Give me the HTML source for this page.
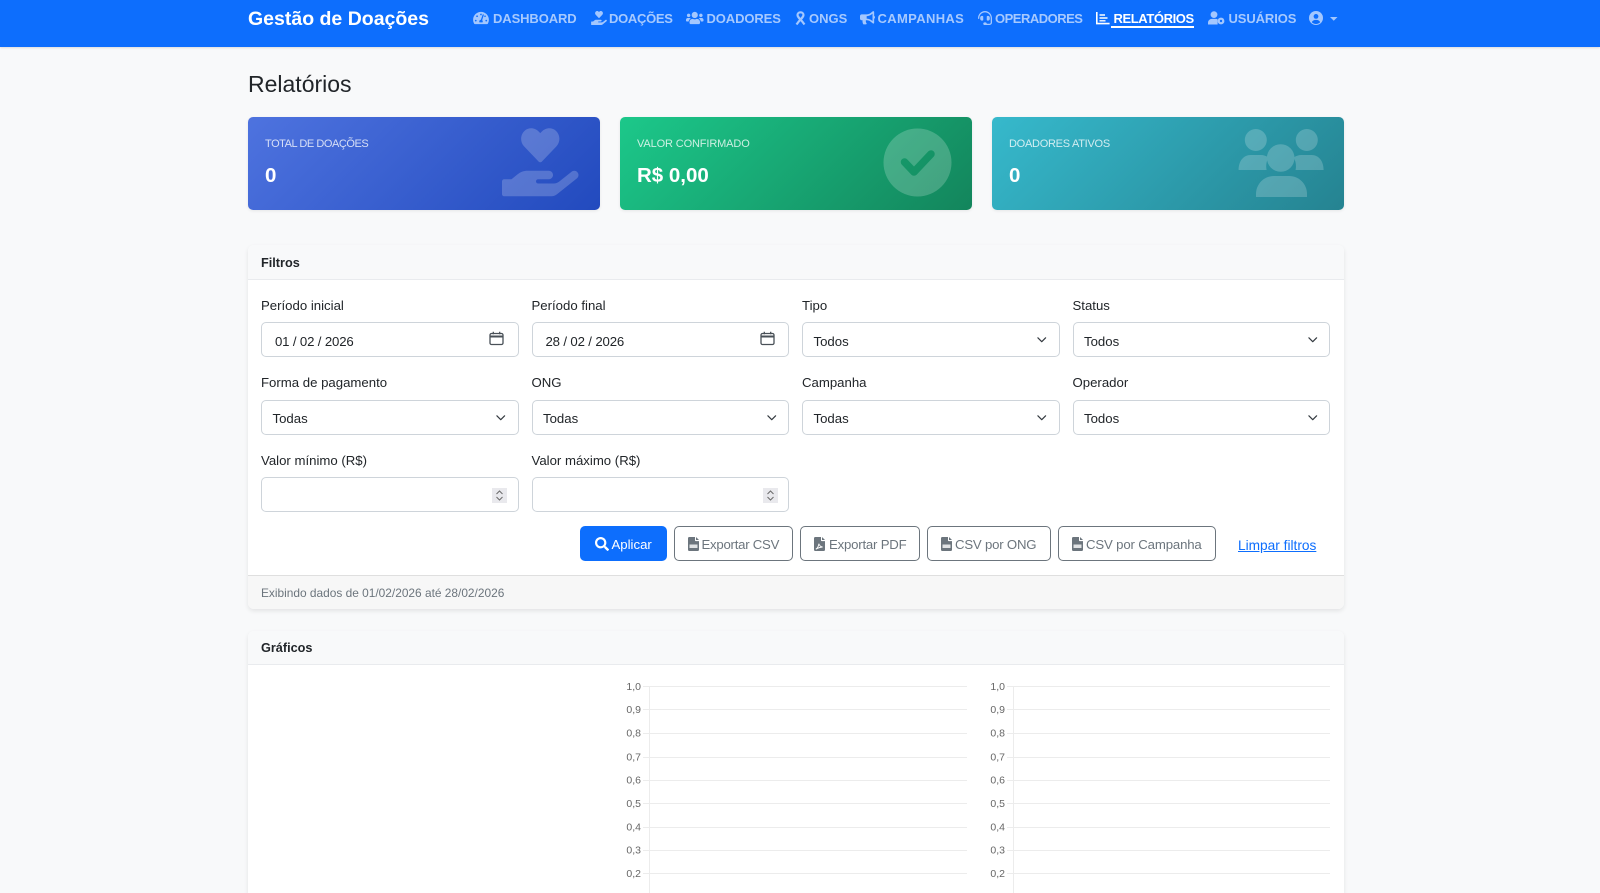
<!DOCTYPE html>
<html lang="pt-BR">
<head>
<meta charset="utf-8">
<title>Relatórios</title>
<style>
html,body{margin:0;padding:0;width:1600px;height:893px;overflow:hidden;background:#f8f9fa;font-family:"Liberation Sans",Arial,sans-serif;color:#212529}
body{position:relative}
*{box-sizing:border-box}
.t{position:absolute;white-space:nowrap;line-height:1}
.abs{position:absolute}
svg{display:block;overflow:visible}
.nav{position:absolute;left:0;top:0;width:1600px;height:47px;background:#0d6efd;box-shadow:0 1px 2px rgba(0,0,0,.12)}
.ni{position:absolute;fill:#a3c7fe}
.nt{position:absolute;top:12px;font-size:13px;line-height:14px;font-weight:700;color:#a6c9fe;white-space:nowrap}
.stat{position:absolute;top:116.5px;width:352px;height:93.5px;border-radius:5px;box-shadow:0 1px 3px rgba(0,0,0,.08)}
.sl{position:absolute;left:17px;top:21.5px;font-size:11px;line-height:12px;color:rgba(255,255,255,.78);white-space:nowrap}
.sv{position:absolute;left:17px;top:47.5px;font-size:20.5px;line-height:24px;font-weight:700;color:#fff;white-space:nowrap}
.si{position:absolute;fill:#fff;opacity:.2}
.card{position:absolute;left:248px;width:1096px;background:#fff;border-radius:6px;box-shadow:0 2px 5px rgba(0,0,0,.09)}
.ch{position:absolute;left:0;top:0;width:100%;background:#f8f9fa;border-bottom:1px solid #e9ebee;border-radius:6px 6px 0 0}
.lb{position:absolute;font-size:13.2px;line-height:16px;color:#212529;white-space:nowrap}
.in{position:absolute;width:257.5px;height:35px;background:#fff;border:1px solid #ced4da;border-radius:5px;font-size:13.2px;line-height:35px;color:#212529;white-space:nowrap}
.in span{position:absolute;top:0}
.in svg{position:absolute}
.r1 span{top:1px}
.btn{position:absolute;top:525.5px;height:35.5px;border:1px solid #6c757d;border-radius:5px;font-size:13.2px;line-height:36px;color:#6c757d;background:#fff;white-space:nowrap}
.btn svg{position:absolute;top:10.5px;fill:#6c757d}
.btn span{position:absolute;top:0}
</style>
</head>
<body>

<div class="nav"></div>
<div class="t" style="left:248px;top:8px;font-size:19.5px;line-height:22px;font-weight:700;color:#fff">Gestão de Doações</div>

<svg class="ni" style="left:473px;top:11px" width="16" height="14" viewBox="0 0 576 512"><path d="M288 32C128.94 32 0 160.94 0 320c0 52.8 14.25 102.26 39.06 144.8 5.61 9.62 16.3 15.2 27.44 15.2h443c11.14 0 21.83-5.58 27.44-15.2C561.75 422.26 576 372.8 576 320c0-159.06-128.94-288-288-288zm0 64c14.71 0 26.58 10.13 30.32 23.65-1.11 2.26-2.64 4.23-3.45 6.67l-9.22 27.67c-5.13 3.49-10.97 6.01-17.64 6.01-17.67 0-32-14.33-32-32S270.33 96 288 96zM96 384c-17.67 0-32-14.33-32-32s14.33-32 32-32 32 14.33 32 32-14.33 32-32 32zm48-160c-17.67 0-32-14.33-32-32s14.33-32 32-32 32 14.33 32 32-14.33 32-32 32zm246.77-72.41l-61.33 184C343.13 347.33 352 364.54 352 384c0 11.72-3.38 22.55-8.88 32H232.88c-5.5-9.45-8.88-20.28-8.88-32 0-33.94 26.5-61.43 59.9-63.59l61.34-184.01c4.17-12.56 17.73-19.45 30.36-15.17 12.57 4.19 19.35 17.79 15.17 30.36zm14.66 57.2l15.52-46.55c3.47-1.29 7.13-2.23 11.05-2.23 17.67 0 32 14.33 32 32s-14.33 32-32 32c-11.38-.01-20.89-6.27-26.57-15.22zM480 384c-17.67 0-32-14.33-32-32s14.33-32 32-32 32 14.33 32 32-14.33 32-32 32z"/></svg>
<div class="nt" style="left:493px;letter-spacing:-.1px">DASHBOARD</div>

<svg class="ni" style="left:590.5px;top:11px" width="16" height="14" viewBox="0 0 576 512"><path d="M275.3 250.5c7 7.4 18.4 7.4 25.5 0l108.9-114.2c31.6-33.2 29.8-88.2-5.6-118.8-30.8-26.7-76.7-21.9-104.9 7.7L288 36.9l-11.1-11.6C248.7-4.4 202.8-9.2 172 17.5c-35.3 30.6-37.2 85.6-5.6 118.8l108.9 114.2zm290 77.6c-11.8-10.7-30.2-10-42.6 0L430.3 402c-11.3 9.1-25.4 14-40 14H272c-8.8 0-16-7.2-16-16s7.2-16 16-16h78.3c15.9 0 30.7-10.9 33.3-26.6 3.3-20-12.1-37.4-31.6-37.4H192c-27 0-53.1 9.3-74.1 26.3L71.4 384H16c-8.8 0-16 7.2-16 16v96c0 8.8 7.2 16 16 16h356.7c14.5 0 28.6-4.9 40-14l151.2-121c15.2-12.1 16.4-35.3 1.4-48.9z"/></svg>
<div class="nt" style="left:609px;letter-spacing:-.3px">DOAÇÕES</div>

<svg class="ni" style="left:686px;top:11px" width="17.5" height="14" viewBox="0 0 640 512"><path d="M96 224c35.3 0 64-28.7 64-64s-28.7-64-64-64-64 28.7-64 64 28.7 64 64 64zm448 0c35.3 0 64-28.7 64-64s-28.7-64-64-64-64 28.7-64 64 28.7 64 64 64zm32 32h-64c-17.6 0-33.5 7.1-45.1 18.6 40.3 22.1 68.9 62 75.1 109.4h66c17.7 0 32-14.3 32-32v-32c0-35.3-28.7-64-64-64zm-256 0c61.9 0 112-50.1 112-112S381.9 32 320 32 208 82.1 208 144s50.1 112 112 112zm76.8 32h-8.3c-20.8 10-43.9 16-68.5 16s-47.6-6-68.5-16h-8.3C179.6 288 128 339.6 128 403.2V432c0 26.5 21.5 48 48 48h288c26.5 0 48-21.5 48-48v-28.8c0-63.6-51.6-115.2-115.2-115.2zm-223.7-13.4C161.5 263.1 145.6 256 128 256H64c-35.3 0-64 28.7-64 64v32c0 17.7 14.3 32 32 32h65.9c6.3-47.4 34.9-87.3 75.2-109.4z"/></svg>
<div class="nt" style="left:706.5px;letter-spacing:-.1px">DOADORES</div>

<svg class="abs" style="left:793.5px;top:11px" width="13" height="14" viewBox="0 0 13 14" fill="none" stroke="#a3c7fe" stroke-width="2.2" stroke-linejoin="round"><path d="M6.500 1.300C4.500 1.300 3.500 2.800 3.500 4c0 1.500 1.500 3 4.500 6.200L10.500 13.500"/><path d="M6.500 1.300C8.500 1.300 9.500 2.800 9.500 4c0 1.500-1.500 3-4.500 6.200L2.500 13.500"/></svg>
<div class="nt" style="left:809px">ONGS</div>

<svg class="ni" style="left:860px;top:11px" width="15" height="13.5" viewBox="0 0 576 512"><path d="M576 240c0-23.63-12.95-44.04-32-55.12V32.01C544 23.26 537.02 0 512 0c-7.12 0-14.19 2.38-19.98 7.02l-85.03 68.03C364.28 109.19 310.66 128 256 128H64c-35.35 0-64 28.65-64 64v96c0 35.35 28.65 64 64 64h33.7c-1.39 10.48-2.18 21.14-2.18 32 0 39.77 9.26 77.35 25.56 110.94 5.19 10.69 16.52 17.06 28.4 17.06h74.28c26.05 0 41.69-29.84 25.9-50.56-16.4-21.52-26.15-48.36-26.15-77.44 0-11.11 1.62-21.79 4.41-32H256c54.66 0 108.28 18.81 150.98 52.95l85.03 68.03a32.023 32.023 0 0 0 19.98 7.02c24.92 0 32-22.78 32-32V295.13C563.05 284.04 576 263.63 576 240zm-96 141.42l-33.05-26.44C392.95 311.78 325.12 288 256 288v-96c69.12 0 136.95-23.78 190.95-66.98L480 98.58v282.84z"/></svg>
<div class="nt" style="left:877.5px;letter-spacing:.35px">CAMPANHAS</div>

<svg class="ni" style="left:977.5px;top:11px" width="14" height="14" viewBox="0 0 512 512"><path d="M192 208c0-17.67-14.33-32-32-32h-16c-35.35 0-64 28.65-64 64v48c0 35.35 28.65 64 64 64h16c17.67 0 32-14.33 32-32V208zm176 144c35.35 0 64-28.65 64-64v-48c0-35.35-28.65-64-64-64h-16c-17.67 0-32 14.33-32 32v112c0 17.67 14.33 32 32 32h16zM256 0C113.18 0 4.58 118.83 0 256v16c0 8.84 7.16 16 16 16h16c8.84 0 16-7.16 16-16v-16c0-114.69 93.31-208 208-208s208 93.31 208 208h-.12c.08 2.43.12 165.72.12 165.72 0 23.35-18.93 42.28-42.28 42.28H320c0-26.51-21.49-48-48-48h-32c-26.51 0-48 21.49-48 48s21.490 48 48 48h181.72c49.86 0 90.28-40.42 90.28-90.28V256C507.42 118.83 398.82 0 256 0z"/></svg>
<div class="nt" style="left:995px;letter-spacing:-.5px">OPERADORES</div>

<svg class="abs" style="left:1096px;top:11px" width="14" height="14" viewBox="0 0 14 14" fill="none" stroke="#fff"><path d="M.8 1v11.600H13.600" stroke-width="1.600"/><path d="M3.500 4h5.500M3.500 7h8M3.500 9.800h6" stroke-width="1.400"/></svg>
<div class="nt" style="left:1110.5px;color:#fff;border-bottom:2px solid #fff;height:16px;padding-left:3px;letter-spacing:-.4px">RELATÓRIOS</div>

<svg class="abs" style="left:1208px;top:11px" width="17" height="14" viewBox="0 0 17 14" fill="#a3c7fe"><circle cx="6" cy="3.600" r="3.400"/><path d="M0 13.500v-1.800C0 9.500 1.800 7.900 4 7.900h3.800c.7 0 1.300.2 1.800.4v5.200z"/><circle cx="13" cy="10" r="3.400"/><circle cx="13" cy="10" r="1.200" fill="#0d6efd"/></svg>
<div class="nt" style="left:1228.5px;letter-spacing:-.1px">USUÁRIOS</div>

<svg class="abs" style="left:1309px;top:11px" width="14" height="14" viewBox="0 0 14 14"><circle cx="7" cy="7" r="7" fill="#a3c7fe"/><circle cx="7" cy="5.400" r="2.400" fill="#0d6efd"/><path d="M2.800 11.300c.6-1.600 2-2.400 4.200-2.400s3.600.8 4.200 2.400C10 12.500 8.600 13 7 13s-3-.5-4.200-1.700z" fill="#0d6efd"/></svg>
<svg class="abs" style="left:1330px;top:16.5px" width="7.500" height="3.800" viewBox="0 0 8 4"><path d="M0 0h8L4 4z" fill="#a3c7fe"/></svg>

<div class="t" style="left:248px;top:70px;font-size:23px;line-height:28px;color:#212529">Relatórios</div>

<!-- Stat cards -->
<div class="stat" style="left:248px;background:linear-gradient(135deg,#4e73df 0%,#224abe 100%)">
  <div class="sl" style="letter-spacing:-.45px">TOTAL DE DOAÇÕES</div><div class="sv">0</div>
  <svg class="si" style="left:254px;top:11.500px" width="76.500" height="68.500" viewBox="0 0 576 512"><path d="M275.3 250.5c7 7.4 18.4 7.4 25.5 0l108.9-114.2c31.6-33.2 29.8-88.2-5.6-118.8-30.8-26.7-76.7-21.9-104.9 7.7L288 36.9l-11.1-11.6C248.7-4.4 202.8-9.2 172 17.5c-35.3 30.6-37.2 85.6-5.6 118.8l108.9 114.2zm290 77.6c-11.8-10.7-30.2-10-42.6 0L430.3 402c-11.3 9.1-25.4 14-40 14H272c-8.8 0-16-7.2-16-16s7.2-16 16-16h78.3c15.9 0 30.7-10.9 33.3-26.6 3.3-20-12.1-37.4-31.6-37.4H192c-27 0-53.1 9.3-74.1 26.3L71.4 384H16c-8.8 0-16 7.2-16 16v96c0 8.8 7.2 16 16 16h356.7c14.5 0 28.6-4.9 40-14l151.2-121c15.2-12.1 16.4-35.3 1.4-48.9z"/></svg>
</div>
<div class="stat" style="left:620px;background:linear-gradient(135deg,#1cc88a 0%,#13855c 100%)">
  <div class="sl" style="letter-spacing:-.13px">VALOR CONFIRMADO</div><div class="sv">R$ 0,00</div>
  <svg class="si" style="left:263px;top:11.5px" width="69" height="69" viewBox="0 0 69 69"><mask id="ck"><rect width="69" height="69" fill="#fff"/><path d="M21.500 34l9.500 10L48 26" fill="none" stroke="#000" stroke-width="7.500" stroke-linecap="round" stroke-linejoin="round"/></mask><circle cx="34.500" cy="34.500" r="34" mask="url(#ck)"/></svg>
</div>
<div class="stat" style="left:992px;background:linear-gradient(135deg,#36b9cc 0%,#258391 100%)">
  <div class="sl" style="letter-spacing:-.27px">DOADORES ATIVOS</div><div class="sv">0</div>
  <svg class="si" style="left:0;top:0" width="352" height="93" viewBox="0 0 352 93"><circle cx="263.800" cy="23" r="11"/><circle cx="314.800" cy="23" r="11"/><circle cx="288.700" cy="41" r="13.800"/><path d="M246.600 53c0-9 5-15 12-15h10c3 0 6 1 8 2.500-2 3-3 8-2 12.500z"/><path d="M331.600 53c0-9-5-15-12-15h-10c-3 0-6 1-8 2.500 2 3 3 8 2 12.500z"/><path d="M264 80v-3c0-10 8-18 18-18h15c10 0 18 8 18 18v3z"/></svg>
</div>

<!-- Filtros card -->
<div class="card" style="top:245px;height:364px">
  <div class="ch" style="height:35px"></div>
  <div class="abs" style="left:0;top:330px;width:100%;height:34px;background:#f7f7f7;border-top:1px solid #dfdfdf;border-radius:0 0 6px 6px"></div>
</div>
<div class="t" style="left:261px;top:255px;font-size:12.7px;line-height:16px;font-weight:700;color:#212529">Filtros</div>

<div class="lb" style="left:261px;top:298px">Período inicial</div>
<div class="lb" style="left:531.5px;top:298px">Período final</div>
<div class="lb" style="left:802px;top:298px">Tipo</div>
<div class="lb" style="left:1072.5px;top:298px">Status</div>

<div class="in r1" style="left:261px;top:322px"><span style="left:13px;letter-spacing:-.15px">01 / 02 / 2026</span>
  <svg style="left:227px;top:8px" width="15" height="15" viewBox="0 0 15 15" fill="none" stroke="#495057" stroke-width="1.300"><rect x="1" y="2.500" width="13" height="11" rx="1.500"/><path d="M1 5.500h13" stroke-width="2"/><path d="M4.300.8v2.400M10.700.8v2.400"/></svg></div>
<div class="in r1" style="left:531.5px;top:322px"><span style="left:13px;letter-spacing:-.15px">28 / 02 / 2026</span>
  <svg style="left:227px;top:8px" width="15" height="15" viewBox="0 0 15 15" fill="none" stroke="#495057" stroke-width="1.300"><rect x="1" y="2.500" width="13" height="11" rx="1.500"/><path d="M1 5.500h13" stroke-width="2"/><path d="M4.300.8v2.400M10.700.8v2.400"/></svg></div>
<div class="in r1" style="left:802px;top:322px"><span style="left:10.5px">Todos</span>
  <svg style="left:234px;top:14px" width="9.500" height="6" viewBox="0 0 11 7" fill="none" stroke="#343a40" stroke-width="1.400" stroke-linecap="round" stroke-linejoin="round"><path d="M1 1l4.500 4.500L10 1"/></svg></div>
<div class="in r1" style="left:1072.5px;top:322px"><span style="left:10.5px">Todos</span>
  <svg style="left:234px;top:14px" width="9.500" height="6" viewBox="0 0 11 7" fill="none" stroke="#343a40" stroke-width="1.400" stroke-linecap="round" stroke-linejoin="round"><path d="M1 1l4.500 4.500L10 1"/></svg></div>

<div class="lb" style="left:261px;top:375px">Forma de pagamento</div>
<div class="lb" style="left:531.5px;top:375px">ONG</div>
<div class="lb" style="left:802px;top:375px">Campanha</div>
<div class="lb" style="left:1072.5px;top:375px">Operador</div>

<div class="in" style="left:261px;top:400px"><span style="left:10.5px">Todas</span>
  <svg style="left:234px;top:14px" width="9.500" height="6" viewBox="0 0 11 7" fill="none" stroke="#343a40" stroke-width="1.400" stroke-linecap="round" stroke-linejoin="round"><path d="M1 1l4.500 4.500L10 1"/></svg></div>
<div class="in" style="left:531.5px;top:400px"><span style="left:10.5px">Todas</span>
  <svg style="left:234px;top:14px" width="9.500" height="6" viewBox="0 0 11 7" fill="none" stroke="#343a40" stroke-width="1.400" stroke-linecap="round" stroke-linejoin="round"><path d="M1 1l4.500 4.500L10 1"/></svg></div>
<div class="in" style="left:802px;top:400px"><span style="left:10.5px">Todas</span>
  <svg style="left:234px;top:14px" width="9.500" height="6" viewBox="0 0 11 7" fill="none" stroke="#343a40" stroke-width="1.400" stroke-linecap="round" stroke-linejoin="round"><path d="M1 1l4.500 4.500L10 1"/></svg></div>
<div class="in" style="left:1072.5px;top:400px"><span style="left:10.5px">Todos</span>
  <svg style="left:234px;top:14px" width="9.500" height="6" viewBox="0 0 11 7" fill="none" stroke="#343a40" stroke-width="1.400" stroke-linecap="round" stroke-linejoin="round"><path d="M1 1l4.500 4.500L10 1"/></svg></div>

<div class="lb" style="left:261px;top:453px">Valor mínimo (R$)</div>
<div class="lb" style="left:531.5px;top:453px">Valor máximo (R$)</div>
<div class="in" style="left:261px;top:477px">
  <svg style="left:230px;top:9.500px" width="15" height="15" viewBox="0 0 15 15"><rect width="15" height="15" fill="#e9e9ed"/><path d="M4.500 6l3-3 3 3M4.500 9l3 3 3-3" fill="none" stroke="#6b6b6b" stroke-width="1"/></svg></div>
<div class="in" style="left:531.5px;top:477px">
  <svg style="left:230px;top:9.500px" width="15" height="15" viewBox="0 0 15 15"><rect width="15" height="15" fill="#e9e9ed"/><path d="M4.500 6l3-3 3 3M4.500 9l3 3 3-3" fill="none" stroke="#6b6b6b" stroke-width="1"/></svg></div>

<!-- Buttons -->
<div class="btn" style="left:579.5px;width:87px;background:#0d6efd;border-color:#0d6efd;color:#fff">
  <svg style="left:14px;fill:#fff" width="14" height="14" viewBox="0 0 512 512"><path d="M505 442.700L405.300 343c-4.500-4.500-10.600-7-17-7H372c27.600-35.300 44-79.700 44-128C416 93.100 322.900 0 208 0S0 93.100 0 208s93.100 208 208 208c48.300 0 92.700-16.400 128-44v16.300c0 6.400 2.500 12.500 7 17l99.700 99.700c9.400 9.400 24.600 9.400 33.900 0l28.300-28.300c9.400-9.400 9.400-24.600.1-34zM208 336c-70.700 0-128-57.200-128-128 0-70.700 57.200-128 128-128 70.700 0 128 57.200 128 128 0 70.700-57.200 128-128 128z"/></svg>
  <span style="left:31px">Aplicar</span></div>

<div class="btn" style="left:673.5px;width:119.5px">
  <svg style="left:13px" width="11" height="14" viewBox="0 0 11 14"><path d="M0 1.200C0 .5.500 0 1.200 0H7v3.400c0 .4.300.7.700.7H11v8.700c0 .7-.5 1.200-1.200 1.200H1.200C.5 14 0 13.500 0 12.800z"/><path d="M8 0l3 3H8z"/><rect x="1.500" y="7.500" width="8" height="3.500" fill="#fff" opacity=".8"/></svg>
  <span style="left:27px;letter-spacing:-.25px">Exportar CSV</span></div>
<div class="btn" style="left:800px;width:119.5px">
  <svg style="left:13px" width="11" height="14" viewBox="0 0 11 14"><path d="M0 1.200C0 .5.500 0 1.200 0H7v3.400c0 .4.300.7.700.7H11v8.700c0 .7-.5 1.200-1.200 1.200H1.200C.5 14 0 13.500 0 12.800z"/><path d="M8 0l3 3H8z"/><path d="M1.800 12.200c1.500-.8 2.700-3.200 3.100-5.500.5 2 1.400 3 3.700 3.300-1.800.1-4.500.9-6.800 2.200z" fill="none" stroke="#fff" stroke-width=".9"/></svg>
  <span style="left:28px;letter-spacing:-.2px">Exportar PDF</span></div>
<div class="btn" style="left:926.5px;width:124.5px">
  <svg style="left:13px" width="11" height="14" viewBox="0 0 11 14"><path d="M0 1.200C0 .5.500 0 1.200 0H7v3.400c0 .4.300.7.700.7H11v8.700c0 .7-.5 1.200-1.200 1.200H1.200C.5 14 0 13.500 0 12.800z"/><path d="M8 0l3 3H8z"/><rect x="1.500" y="7.500" width="8" height="3.500" fill="#fff" opacity=".8"/></svg>
  <span style="left:27.5px;letter-spacing:-.2px">CSV por ONG</span></div>
<div class="btn" style="left:1058px;width:157.5px">
  <svg style="left:13px" width="11" height="14" viewBox="0 0 11 14"><path d="M0 1.200C0 .5.500 0 1.200 0H7v3.400c0 .4.300.7.700.7H11v8.700c0 .7-.5 1.200-1.200 1.200H1.200C.5 14 0 13.500 0 12.800z"/><path d="M8 0l3 3H8z"/><rect x="1.500" y="7.500" width="8" height="3.500" fill="#fff" opacity=".8"/></svg>
  <span style="left:27px;letter-spacing:-.15px">CSV por Campanha</span></div>
<div class="t" style="left:1238px;top:537.5px;font-size:13.7px;line-height:16px;color:#0d6efd;text-decoration:underline">Limpar filtros</div>

<div class="t" style="left:261px;top:585.5px;font-size:11.9px;line-height:14px;color:#6c757d">Exibindo dados de 01/02/2026 até 28/02/2026</div>

<!-- Gráficos card -->
<div class="card" style="top:631px;height:262px;border-radius:6px 6px 0 0">
  <div class="ch" style="height:34px"></div>
</div>
<div class="t" style="left:261px;top:639.5px;font-size:12.7px;line-height:16px;font-weight:700;color:#212529">Gráficos</div>

<svg class="abs" style="left:0;top:0;overflow:hidden" width="1600" height="893" viewBox="0 0 1600 893">
  <g stroke="#ececec" stroke-width="1" fill="none" shape-rendering="crispEdges">
    <path d="M649.500 686.500V893M1013.500 686.500V893"/>
    <path d="M643 686.500H967M643 709.500H967M643 733.500H967M643 757.500H967M643 780.500H967M643 803.500H967M643 827.500H967M643 850.500H967M643 873.500H967"/>
    <path d="M1007 686.500H1330M1007 709.500H1330M1007 733.500H1330M1007 757.500H1330M1007 780.500H1330M1007 803.500H1330M1007 827.500H1330M1007 850.500H1330M1007 873.500H1330"/>
  </g>
  <g font-family="'Liberation Sans',Arial,sans-serif" font-size="10.500" fill="#666" text-anchor="end">
    <text x="641" y="690">1,0</text><text x="641" y="713">0,9</text><text x="641" y="736.500">0,8</text><text x="641" y="760.500">0,7</text><text x="641" y="783.500">0,6</text><text x="641" y="807">0,5</text><text x="641" y="830.500">0,4</text><text x="641" y="853.500">0,3</text><text x="641" y="877">0,2</text>
    <text x="1005" y="690">1,0</text><text x="1005" y="713">0,9</text><text x="1005" y="736.500">0,8</text><text x="1005" y="760.500">0,7</text><text x="1005" y="783.500">0,6</text><text x="1005" y="807">0,5</text><text x="1005" y="830.500">0,4</text><text x="1005" y="853.500">0,3</text><text x="1005" y="877">0,2</text>
  </g>
</svg>

</body>
</html>
